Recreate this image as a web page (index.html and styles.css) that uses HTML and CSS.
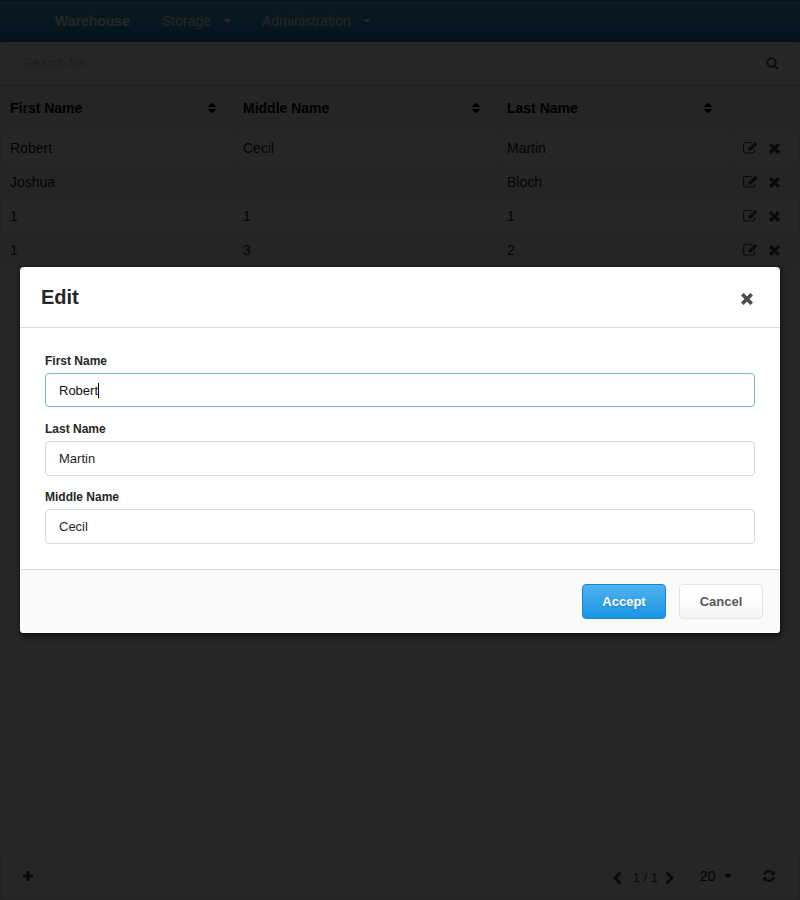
FILE: index.html
```html
<!DOCTYPE html>
<html lang="en">
<head>
<meta charset="utf-8">
<title>Warehouse</title>
<link rel="stylesheet" href="styles.css">
</head>
<body>
<svg width="0" height="0" class="defs" aria-hidden="true">
  <symbol id="x" viewBox="0 0 14 14"><path d="M3 3L11 11M11 3L3 11" fill="none" stroke="currentColor" stroke-width="4.3" stroke-linecap="square" stroke-linejoin="round"/></symbol>
  <symbol id="edit" viewBox="0 0 15 13"><path d="M9 1.500H2.500A2 2 0 0 0 .6 3.500V10A2 2 0 0 0 2.600 12H9.500A2 2 0 0 0 11.500 10V8.500" fill="none" stroke="currentColor" stroke-width="1.100"/><path d="M5.500 9.500V7L11.800 .7L14.300 3.200L8 9.500Z" fill="currentColor"/><path d="M7.500 7L11.500 3" stroke="#fff" stroke-width=".6"/></symbol>
  <symbol id="sort" viewBox="0 0 10 12"><path d="M.5 5L5 .5L9.500 5ZM.5 7L5 11.500L9.500 7Z" fill="currentColor"/></symbol>
  <symbol id="caret" viewBox="0 0 8 4"><path d="M0 0H8L4 4Z" fill="currentColor"/></symbol>
</svg>
<div class="page">
  <nav class="nav">
    <span class="spacer"></span>
    <span class="item brand">Warehouse</span>
    <span class="item storage">Storage<svg class="caret"><use href="#caret"/></svg></span>
    <span class="item admin">Administration<svg class="caret"><use href="#caret"/></svg></span>
  </nav>
  <div class="search">
    <span class="query">Search for...</span>
    <span class="go"><svg width="13" height="13" viewBox="0 0 13 13" fill="none" stroke="currentColor" stroke-width="2"><circle cx="5.500" cy="5.500" r="4.200"/><path d="M8.500 8.500L12 12"/></svg></span>
  </div>
  <table class="grid">
    <colgroup><col class="c1"><col class="c2"><col class="c3"><col></colgroup>
    <thead><tr>
      <th><div>First Name<svg class="sort"><use href="#sort"/></svg></div></th>
      <th><div>Middle Name<svg class="sort"><use href="#sort"/></svg></div></th>
      <th><div>Last Name<svg class="sort"><use href="#sort"/></svg></div></th>
      <th></th>
    </tr></thead>
    <tbody>
      <tr><td>Robert</td><td>Cecil</td><td>Martin</td><td><div class="acts"><svg class="edit"><use href="#edit"/></svg><svg class="del"><use href="#x"/></svg></div></td></tr>
      <tr><td>Joshua</td><td></td><td>Bloch</td><td><div class="acts"><svg class="edit"><use href="#edit"/></svg><svg class="del"><use href="#x"/></svg></div></td></tr>
      <tr><td>1</td><td>1</td><td>1</td><td><div class="acts"><svg class="edit"><use href="#edit"/></svg><svg class="del"><use href="#x"/></svg></div></td></tr>
      <tr><td>1</td><td>3</td><td>2</td><td><div class="acts"><svg class="edit"><use href="#edit"/></svg><svg class="del"><use href="#x"/></svg></div></td></tr>
    </tbody>
  </table>
  <footer class="foot">
    <span class="box"><svg width="10" height="10" viewBox="0 0 10 10"><path d="M5 0V10M0 5H10" stroke="currentColor" stroke-width="3"/></svg></span>
    <span class="pager">
      <svg width="9" height="14" viewBox="0 0 9 14"><path d="M7.500 1.500L2 7L7.500 12.500" fill="none" stroke="currentColor" stroke-width="2.800"/></svg>
      <span class="count">1 / 1</span>
      <svg width="9" height="14" viewBox="0 0 9 14"><path d="M1.500 1.500L7 7L1.500 12.500" fill="none" stroke="currentColor" stroke-width="2.800"/></svg>
    </span>
    <span class="size">20<svg class="caret"><use href="#caret"/></svg></span>
    <span class="box"><svg width="12" height="12" viewBox="0 0 12 12"><path d="M1 5A5 5 0 0 1 9.500 2.800M11 7A5 5 0 0 1 2.500 9.200" fill="none" stroke="currentColor" stroke-width="2.100"/><path d="M12 .5V5H7.500ZM0 11.500V7H4.500Z" fill="currentColor"/></svg></span>
  </footer>
</div>
<div class="dimmer">
  <section class="modal">
    <header class="head"><h1>Edit</h1><svg class="close"><use href="#x"/></svg></header>
    <form class="form">
      <label>First Name</label><div class="input focus">Robert<i class="cursor"></i></div>
      <label>Last Name</label><div class="input">Martin</div>
      <label>Middle Name</label><div class="input">Cecil</div>
    </form>
    <div class="actions"><button class="btn primary">Accept</button><button class="btn">Cancel</button></div>
  </section>
</div>
</body>
</html>
```
FILE: styles.css
```css
* { box-sizing: border-box; }
body { margin: 0; height: 900px; overflow: hidden; background: #fff; font: 14px/18px "Liberation Sans", Arial, sans-serif; color: #333; }
svg { display: block; flex: none; }
.defs { position: absolute; }
.page { height: 900px; display: flex; flex-direction: column; }
.nav { height: 42px; display: flex; align-items: stretch; background: linear-gradient(#4fb0e8, #0f84c8); border-top: 1px solid #1680c0; border-bottom: 1px solid #0f77b4; color: #fff; }
.spacer { width: 40px; border-right: 1px solid rgba(0,0,0,.06); }
.item { display: flex; align-items: center; padding-left: 15px; border-right: 1px solid rgba(0,0,0,.06); }
.brand { width: 106px; font-weight: bold; }
.storage { width: 100px; padding-left: 16px; }
.admin { width: 140px; padding-left: 16px; }
.item .caret { margin-left: 12px; }
.caret { width: 8px; height: 4px; }
.search { height: 42px; display: flex; padding: 3px 9px 4px; }
.query { flex: 1; border: 1px solid #e0e0e0; border-radius: 4px 0 0 4px; padding: 8px 14px; font-size: 13px; color: #bbb; }
.go { width: 37px; border: 1px solid #e0e0e0; border-left: 0; border-radius: 0 4px 4px 0; display: flex; align-items: center; justify-content: center; color: #555; padding-top: 2px; }
.grid { width: 800px; table-layout: fixed; border-collapse: separate; border-spacing: 0; border: 1px solid #e0e0e0; border-top: 3px solid #ddd; border-radius: 4px; color: #222; }
.c1 { width: 233px; }
.c2 { width: 264px; }
.c3 { width: 232px; }
.grid th, .grid td { padding: 0 9px; text-align: left; border-right: 1px solid #e2e2e2; }
.grid th:last-child, .grid td:last-child { border-right: 0; }
.grid th { height: 43px; background: #f8f8f8; }
.grid th div { display: flex; justify-content: space-between; align-items: center; color: #000; padding-bottom: 1px; }
.sort { width: 10px; height: 12px; margin-right: 7px; }
.grid td { height: 34px; border-top: 1px solid #e2e2e2; }
.grid tr:nth-child(even) td { background: #f8f8f8; }
.acts { display: flex; align-items: center; gap: 11px; padding-left: 4px; color: #444; }
.edit { width: 15px; height: 13px; }
.del { width: 11px; height: 11px; margin-top: 1px; }
.foot { margin-top: auto; height: 48px; border: 1px solid #e4e4e4; border-radius: 4px; display: flex; align-items: center; padding: 0 11px 0 8px; color: #444; }
.box { width: 38px; height: 36px; border: 1px solid #e6e6e6; border-radius: 4px; display: flex; align-items: center; justify-content: center; }
.pager { display: flex; align-items: center; margin-left: auto; margin-right: 11px; font-size: 13px; padding-top: 4px; }
.count { padding: 0 7px 0 11px; }
.size { width: 61px; height: 38px; border: 1px solid #e0e0e0; border-radius: 4px; display: flex; align-items: center; padding-left: 14px; color: #222; margin-right: 4px; }
.size .caret { margin-left: 8px; }
.dimmer { position: absolute; inset: 0; background: rgba(0,0,0,.85); display: flex; align-items: center; justify-content: center; }
.modal { width: 760px; height: 366px; background: #fff; border-radius: 4px; overflow: hidden; box-shadow: 1px 3px 6px rgba(0,0,0,.7); display: flex; flex-direction: column; }
.head { height: 61px; border-bottom: 1px solid #dcdedf; display: flex; align-items: center; justify-content: space-between; padding: 0 27px 0 21px; }
h1 { margin: 0; font-size: 20px; line-height: 24px; color: #262626; }
.close { width: 12px; height: 12px; color: #4c4c4c; margin-top: 4px; }
.form { padding: 25px 25px 0; flex: 1; }
label { display: block; font-size: 12px; line-height: 16px; font-weight: bold; margin-bottom: 4px; color: #262626; }
.input { height: 35px; border: 1px solid #d9dadb; border-radius: 4px; padding: 8px 13px; font-size: 13px; line-height: 17px; margin-bottom: 13px; color: #262626; display: flex; }
.focus { height: 34px; border-color: #7cb5dc; margin-bottom: 14px; color: #111; }
.cursor { width: 1px; height: 15px; background: #000; margin-top: 1px; }
.actions { height: 64px; border-top: 1px solid #d9dadb; background: #f9fafc; display: flex; justify-content: flex-end; gap: 13px; padding: 14px 17px 0; }
.btn { width: 84px; height: 35px; border: 1px solid #e2e3e5; border-radius: 4px; background: linear-gradient(#fff 40%, #f3f3f3); font: bold 13px "Liberation Sans", sans-serif; color: #595959; padding: 0; }
.primary { border-color: #1684c8; background: linear-gradient(#4fb2ed, #1b95e4); color: #fff; text-shadow: 0 1px 1px rgba(0,0,0,.2); }
```
